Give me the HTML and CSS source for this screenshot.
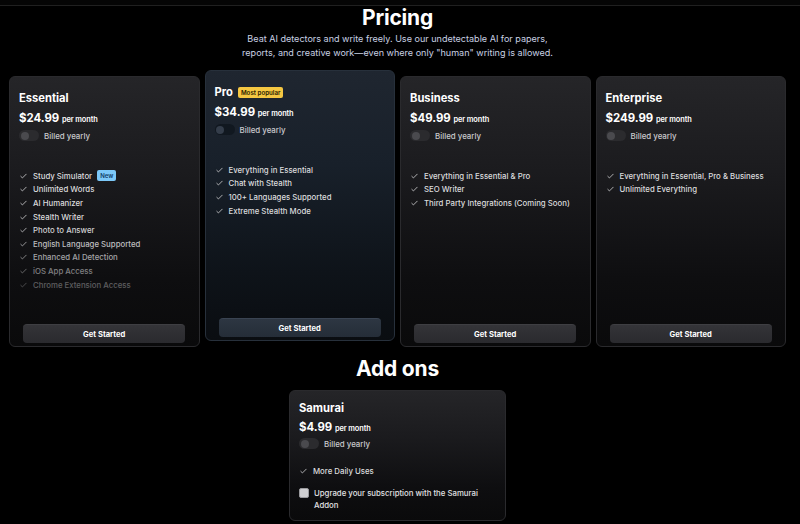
FILE: index.html
```html
<!DOCTYPE html>
<html lang="en">
<head>
<meta charset="utf-8">
<title>Pricing</title>
<link rel="stylesheet" href="styles.css">
</head>
<body>
<div class="topbar"></div>
<main class="page">
  <h1 class="heading">Pricing</h1>
  <p class="subtitle">Beat AI detectors and write freely. Use our undetectable AI for papers,<br>reports, and creative work—even where only "human" writing is allowed.</p>

  <section class="plans">
    <article class="card">
      <div class="card-title">Essential</div>
      <div class="price">$24.99 <span class="per">per month</span></div>
      <div class="billing"><span class="toggle"><span class="knob"></span></span><span class="billing-label">Billed yearly</span></div>
      <ul class="features">
        <li><svg class="check" viewBox="0 0 8 6"><path d="M0.6 3.1 L2.8 5.2 L7.4 0.6"/></svg>Study Simulator<span class="new">New</span></li>
        <li><svg class="check" viewBox="0 0 8 6"><path d="M0.6 3.1 L2.8 5.2 L7.4 0.6"/></svg>Unlimited Words</li>
        <li><svg class="check" viewBox="0 0 8 6"><path d="M0.6 3.1 L2.8 5.2 L7.4 0.6"/></svg>AI Humanizer</li>
        <li><svg class="check" viewBox="0 0 8 6"><path d="M0.6 3.1 L2.8 5.2 L7.4 0.6"/></svg>Stealth Writer</li>
        <li class="fade1"><svg class="check" viewBox="0 0 8 6"><path d="M0.6 3.1 L2.8 5.2 L7.4 0.6"/></svg>Photo to Answer</li>
        <li class="fade2"><svg class="check" viewBox="0 0 8 6"><path d="M0.6 3.1 L2.8 5.2 L7.4 0.6"/></svg>English Language Supported</li>
        <li class="fade3"><svg class="check" viewBox="0 0 8 6"><path d="M0.6 3.1 L2.8 5.2 L7.4 0.6"/></svg>Enhanced AI Detection</li>
        <li class="fade4"><svg class="check" viewBox="0 0 8 6"><path d="M0.6 3.1 L2.8 5.2 L7.4 0.6"/></svg>iOS App Access</li>
        <li class="fade5"><svg class="check" viewBox="0 0 8 6"><path d="M0.6 3.1 L2.8 5.2 L7.4 0.6"/></svg>Chrome Extension Access</li>
      </ul>
      <button class="cta">Get Started</button>
    </article>

    <article class="card card-pro">
      <div class="card-title">Pro <span class="popular">Most popular</span></div>
      <div class="price">$34.99 <span class="per">per month</span></div>
      <div class="billing"><span class="toggle"><span class="knob"></span></span><span class="billing-label">Billed yearly</span></div>
      <ul class="features">
        <li><svg class="check" viewBox="0 0 8 6"><path d="M0.6 3.1 L2.8 5.2 L7.4 0.6"/></svg>Everything in Essential</li>
        <li><svg class="check" viewBox="0 0 8 6"><path d="M0.6 3.1 L2.8 5.2 L7.4 0.6"/></svg>Chat with Stealth</li>
        <li><svg class="check" viewBox="0 0 8 6"><path d="M0.6 3.1 L2.8 5.2 L7.4 0.6"/></svg>100+ Languages Supported</li>
        <li><svg class="check" viewBox="0 0 8 6"><path d="M0.6 3.1 L2.8 5.2 L7.4 0.6"/></svg>Extreme Stealth Mode</li>
      </ul>
      <button class="cta cta-pro">Get Started</button>
    </article>

    <article class="card">
      <div class="card-title">Business</div>
      <div class="price">$49.99 <span class="per">per month</span></div>
      <div class="billing"><span class="toggle"><span class="knob"></span></span><span class="billing-label">Billed yearly</span></div>
      <ul class="features">
        <li><svg class="check" viewBox="0 0 8 6"><path d="M0.6 3.1 L2.8 5.2 L7.4 0.6"/></svg>Everything in Essential &amp; Pro</li>
        <li><svg class="check" viewBox="0 0 8 6"><path d="M0.6 3.1 L2.8 5.2 L7.4 0.6"/></svg>SEO Writer</li>
        <li><svg class="check" viewBox="0 0 8 6"><path d="M0.6 3.1 L2.8 5.2 L7.4 0.6"/></svg>Third Party Integrations (Coming Soon)</li>
      </ul>
      <button class="cta">Get Started</button>
    </article>

    <article class="card">
      <div class="card-title">Enterprise</div>
      <div class="price">$249.99 <span class="per">per month</span></div>
      <div class="billing"><span class="toggle"><span class="knob"></span></span><span class="billing-label">Billed yearly</span></div>
      <ul class="features">
        <li><svg class="check" viewBox="0 0 8 6"><path d="M0.6 3.1 L2.8 5.2 L7.4 0.6"/></svg>Everything in Essential, Pro &amp; Business</li>
        <li><svg class="check" viewBox="0 0 8 6"><path d="M0.6 3.1 L2.8 5.2 L7.4 0.6"/></svg>Unlimited Everything</li>
      </ul>
      <button class="cta">Get Started</button>
    </article>
  </section>

  <h2 class="heading heading-addons">Add ons</h2>

  <article class="card addon">
    <div class="card-title">Samurai</div>
    <div class="price">$4.99 <span class="per">per month</span></div>
    <div class="billing"><span class="toggle"><span class="knob"></span></span><span class="billing-label">Billed yearly</span></div>
    <ul class="features">
      <li><svg class="check" viewBox="0 0 8 6"><path d="M0.6 3.1 L2.8 5.2 L7.4 0.6"/></svg>More Daily Uses</li>
    </ul>
    <label class="upgrade"><span class="checkbox"></span><span>Upgrade your subscription with the Samurai Addon</span></label>
  </article>
</main>
</body>
</html>
```

FILE: styles.css
```css
* { box-sizing: border-box; }

html, body {
  margin: 0;
  padding: 0;
  background: #000;
}

body {
  font-family: Inter, "Noto Sans", sans-serif;
  color: #fff;
  width: 800px;
  height: 524px;
  overflow: hidden;
}

.topbar {
  height: 6px;
  border-bottom: 1px solid #202020;
  background: #050505;
}

.page {
  width: 795px;
  display: flex;
  flex-direction: column;
  align-items: center;
}

.heading {
  margin: 0;
  font-size: 21px;
  line-height: 24px;
  font-weight: 700;
  letter-spacing: -0.2px;
  color: #fff;
}

.subtitle {
  margin: 2px 0 0;
  font-size: 9.05px;
  line-height: 14px;
  text-align: center;
  color: #c9d1e3;
}

.plans {
  margin-top: 16px;
  width: 777px;
  display: grid;
  grid-template-columns: repeat(4, 1fr);
  gap: 5px;
}

.card {
  height: 271px;
  display: flex;
  flex-direction: column;
  padding: 14px 9px 3px;
  border-radius: 6px;
  border: 1px solid #2a2a2d;
  background: linear-gradient(180deg, #252528 0%, #1b1b1e 35%, #0e0e10 75%, #0a0a0b 100%);
}

.card-pro {
  transform: translateY(-6px);
  border-color: #27303b;
  background: linear-gradient(180deg, #1f2630 0%, #18202a 35%, #0e1319 75%, #0a0d11 100%);
}

.card-title {
  display: flex;
  align-items: center;
  gap: 5px;
  height: 14px;
  font-size: 11.2px;
  line-height: 14px;
  font-weight: 700;
  color: #fff;
}

.popular {
  font-size: 6.2px;
  line-height: 11px;
  height: 11px;
  padding: 0 3px;
  border-radius: 2px;
  background: #f5c742;
  color: #2c2200;
  font-weight: 600;
}

.price {
  margin-top: 5px;
  height: 16px;
  font-size: 11.4px;
  line-height: 16px;
  font-weight: 700;
  color: #fff;
}

.per {
  font-size: 7.4px;
  line-height: 1;
  font-weight: 600;
  letter-spacing: -0.1px;
}

.billing {
  margin-top: 3px;
  display: flex;
  align-items: center;
  gap: 5px;
  height: 13px;
}

.toggle {
  width: 20px;
  height: 11px;
  border-radius: 6px;
  background: #2b2b2e;
  display: flex;
  align-items: center;
  padding: 0 1.5px;
}

.card-pro .toggle { background: #111820; }

.knob {
  width: 8px;
  height: 8px;
  border-radius: 50%;
  background: #4a4a4e;
}

.card-pro .knob { background: #343d4a; }

.billing-label {
  font-size: 7.9px;
  font-weight: 500;
  color: #c9c9cc;
}

.features {
  list-style: none;
  margin: 27px 0 0;
  padding: 0;
  flex: 1;
}

.features li {
  display: flex;
  align-items: center;
  height: 13.6px;
  font-size: 7.8px;
  font-weight: 500;
  color: #dcdcde;
  white-space: nowrap;
}

.check {
  width: 7px;
  height: 6px;
  margin: 0 6px 0 1px;
  fill: none;
  stroke: #c4c4c6;
  stroke-width: 1;
  flex: none;
}

.fade1 { opacity: 0.95; }
.fade2 { opacity: 0.85; }
.fade3 { opacity: 0.72; }
.fade4 { opacity: 0.55; }
.fade5 { opacity: 0.38; }

.new {
  margin-left: 5px;
  height: 11px;
  line-height: 11px;
  padding: 0 3px;
  border-radius: 2px;
  background: #7cc8f8;
  color: #0d3b66;
  font-size: 6px;
  font-weight: 600;
}

.cta {
  align-self: center;
  width: 162px;
  height: 19px;
  border: none;
  border-top: 1px solid #3e3e42;
  border-radius: 4px;
  background: linear-gradient(180deg, #343438, #2a2a2e);
  color: #fff;
  font-family: Inter, "Noto Sans", sans-serif;
  font-size: 7.6px;
  font-weight: 700;
  padding: 0;
}

.cta-pro {
  border-top-color: #3a4452;
  background: linear-gradient(180deg, #2d3642, #252d38);
}

.heading-addons {
  margin-top: 10px;
}

.addon {
  margin-top: 9px;
  width: 217px;
  height: 131px;
  padding: 10px 9px 0;
}

.addon .price { margin-top: 4px; }

.addon .billing { margin-top: 2px; }

.addon .features {
  margin-top: 14px;
  flex: none;
}

.upgrade {
  margin-top: 9px;
  display: flex;
  align-items: flex-start;
  gap: 5px;
  font-size: 7.8px;
  line-height: 12px;
  font-weight: 500;
  color: #e2e2e4;
}

.checkbox {
  flex: none;
  width: 10px;
  height: 10px;
  margin-top: 1px;
  border-radius: 2px;
  background: #cfcfd2;
  border: 1px solid #9a9a9e;
}
```
